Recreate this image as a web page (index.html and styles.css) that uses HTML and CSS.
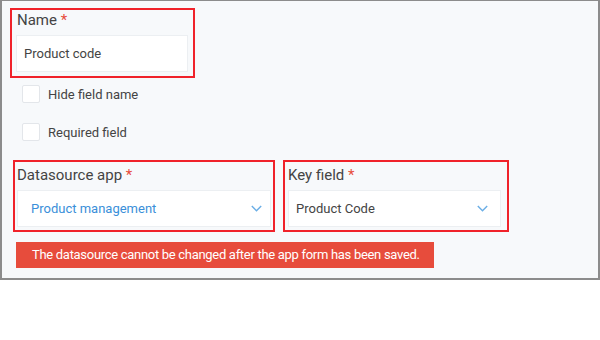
FILE: index.html
```html
<!DOCTYPE html>
<html>
<head>
    <title>Field settings</title>
    <link rel="stylesheet" href="styles.css">
</head>
<body>
    <div class="panel">
        <div class="field field-name">
            <label class="field-label">Name <span class="req">*</span></label>
            <div class="input">Product code</div>
        </div>

        <div class="check-row">
            <span class="checkbox"></span>
            <span class="check-label">Hide field name</span>
        </div>
        <div class="check-row">
            <span class="checkbox"></span>
            <span class="check-label">Required field</span>
        </div>

        <div class="select-row">
            <div class="field field-app">
                <label class="field-label">Datasource app <span class="req">*</span></label>
                <div class="input select app-select">
                    <span>Product management</span>
                    <svg class="chevron" width="11" height="7" viewBox="0 0 11 7"><path d="M0.8 1 L5.5 5.8 L10.2 1" fill="none" stroke="#6aaee6" stroke-width="1.4"/></svg>
                </div>
            </div>
            <div class="field field-key">
                <label class="field-label">Key field <span class="req">*</span></label>
                <div class="input select key-select">
                    <span>Product Code</span>
                    <svg class="chevron" width="11" height="7" viewBox="0 0 11 7"><path d="M0.8 1 L5.5 5.8 L10.2 1" fill="none" stroke="#6aaee6" stroke-width="1.4"/></svg>
                </div>
            </div>
        </div>

        <div class="error">The datasource cannot be changed after the app form has been saved.</div>
    </div>
</body>
</html>
```

FILE: styles.css
```css
body {
    margin: 0;
    background-color: #fff;
    font-family: Roboto, "Noto Sans", sans-serif;
    color: #444;
}

.panel {
    box-sizing: border-box;
    width: 600px;
    height: 280px;
    border: 2px solid #8c8c8c;
    border-top-width: 1px;
    background-color: #f7f9fb;
    padding: 7px 0 0 8px;
}

.field {
    box-sizing: border-box;
    border: 2px solid #f0222a;
}

.field-label {
    display: block;
    font-size: 15px;
    line-height: 20px;
    color: #444;
    margin-bottom: 5px;
}

.req {
    color: #e74c3c;
}

.input {
    box-sizing: border-box;
    height: 37px;
    background-color: #fff;
    border: 1px solid #eceff2;
    padding: 0 7px;
    font-size: 13px;
    line-height: 35px;
    color: #444;
}

.field-name {
    width: 185px;
    height: 70px;
    padding: 0 5px 0 4px;
}

.field-name .field-label {
    padding-left: 1px;
}

.check-row {
    display: flex;
    align-items: center;
    margin: 7px 0 0 12px;
    height: 18px;
}

.check-row + .check-row {
    margin-top: 20px;
}

.checkbox {
    box-sizing: border-box;
    width: 18px;
    height: 18px;
    background-color: #fff;
    border: 1px solid #e3e6ea;
    border-radius: 2px;
    margin-right: 8px;
}

.check-label {
    font-size: 13px;
    color: #444;
}

.select-row {
    display: flex;
    gap: 8px;
    margin: 19px 0 0 3px;
}

.field-app {
    width: 262px;
    height: 72px;
    padding: 3px 2px 0 2px;
}

.field-key {
    width: 226px;
    height: 72px;
    padding: 3px 6px 0 3px;
}

.select {
    display: flex;
    justify-content: space-between;
    align-items: center;
}

.app-select {
    color: #3a8fd9;
    padding: 0 8px 0 13px;
}

.key-select {
    padding: 0 12px 0 7px;
}

.error {
    box-sizing: border-box;
    width: 418px;
    height: 26px;
    margin: 10px 0 0 6px;
    background-color: #e74c3c;
    color: #fff;
    font-size: 13px;
    letter-spacing: -0.3px;
    white-space: nowrap;
    line-height: 26px;
    padding-left: 16px;
}
```
